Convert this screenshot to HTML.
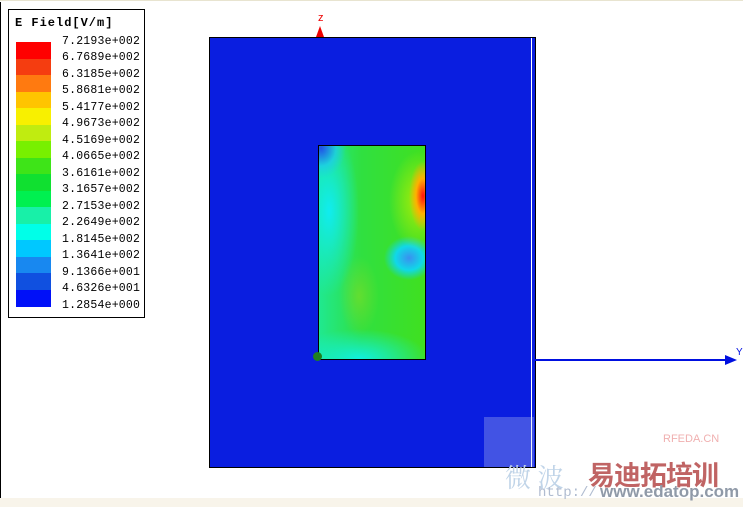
<!DOCTYPE html>
<html><head><style>
body{margin:0;width:743px;height:507px;background:#fff;position:relative;overflow:hidden;font-family:"Liberation Mono",monospace}
.a{position:absolute}
#leg{left:8px;top:9px;width:135px;height:307px;border:1px solid #000;background:#fff}
.sw{position:absolute;left:7px;width:35px;height:17px}
.lb{position:absolute;left:53px;font-size:11.5px;color:#000;letter-spacing:0.2px}
</style></head><body>
<div class="a" style="left:0;top:0;width:743px;height:1px;background:#e8e4d0"></div>
<div class="a" style="left:0;top:2px;width:1px;height:496px;background:#000"></div>
<div class="a" style="left:0;top:498px;width:743px;height:9px;background:#f8f4ea"></div>
<div id="leg" class="a">
<div class="a" style="left:6px;top:6px;font-size:12px;font-weight:bold;letter-spacing:1px">E Field[V/m]</div>
<div class="sw" style="top:32px;background:#ff0000"></div><div class="lb" style="top:25px">7.2193e+002</div>
<div class="sw" style="top:49px;background:#f53d10"></div><div class="lb" style="top:41px">6.7689e+002</div>
<div class="sw" style="top:65px;background:#ff7a10"></div><div class="lb" style="top:58px">6.3185e+002</div>
<div class="sw" style="top:82px;background:#ffc400"></div><div class="lb" style="top:74px">5.8681e+002</div>
<div class="sw" style="top:98px;background:#f8f000"></div><div class="lb" style="top:91px">5.4177e+002</div>
<div class="sw" style="top:115px;background:#c0ec10"></div><div class="lb" style="top:107px">4.9673e+002</div>
<div class="sw" style="top:131px;background:#78f000"></div><div class="lb" style="top:124px">4.5169e+002</div>
<div class="sw" style="top:148px;background:#3ee418"></div><div class="lb" style="top:140px">4.0665e+002</div>
<div class="sw" style="top:164px;background:#10e030"></div><div class="lb" style="top:157px">3.6161e+002</div>
<div class="sw" style="top:181px;background:#00f050"></div><div class="lb" style="top:173px">3.1657e+002</div>
<div class="sw" style="top:197px;background:#18f0a8"></div><div class="lb" style="top:190px">2.7153e+002</div>
<div class="sw" style="top:214px;background:#00ffe8"></div><div class="lb" style="top:206px">2.2649e+002</div>
<div class="sw" style="top:230px;background:#00c8ff"></div><div class="lb" style="top:223px">1.8145e+002</div>
<div class="sw" style="top:247px;background:#1888f0"></div><div class="lb" style="top:239px">1.3641e+002</div>
<div class="sw" style="top:263px;background:#1050e0"></div><div class="lb" style="top:256px">9.1366e+001</div>
<div class="sw" style="top:280px;background:#0010f8"></div><div class="lb" style="top:272px">4.6326e+001</div>
<div class="lb" style="top:289px">1.2854e+000</div>
</div>
<div class="a" style="left:209px;top:37px;width:325px;height:429px;border:1px solid #000;background:#0a1ee0"></div>
<div class="a" style="left:531px;top:38px;width:1px;height:429px;background:#fff"></div>
<div class="a" style="left:318px;top:145px;width:106px;height:213px;border:1px solid #000;background:
radial-gradient(ellipse 14px 35px at 104px 50px,#ff1010,#ffb000 50%,rgba(255,240,0,0) 100%),
radial-gradient(ellipse 30px 50px at 100px 55px,rgba(200,240,0,.8),rgba(120,230,0,0)),
radial-gradient(ellipse 25px 22px at 90px 112px,#3a90f0,#10d8e8 55%,rgba(0,230,180,0)),
radial-gradient(ellipse 25px 30px at 2px 2px,#2050e8,rgba(30,200,240,.7) 60%,rgba(0,0,0,0)),
radial-gradient(ellipse 30px 85px at 10px 65px,#10ecf0,rgba(20,230,180,0)),
radial-gradient(ellipse 70px 30px at 40px 213px,#10f0e0,rgba(20,230,120,0)),
radial-gradient(ellipse 20px 40px at 40px 150px,rgba(120,220,40,.7),rgba(0,0,0,0)),
linear-gradient(90deg,#20e890,#30e040 40%,#40e020)"></div>
<div class="a" style="left:313px;top:352px;width:9px;height:9px;border-radius:50%;background:#208020"></div>
<div class="a" style="left:318px;top:12px;color:#e00;font-size:11px;font-family:'Liberation Sans',sans-serif">z</div>
<div class="a" style="left:316px;top:26px;width:0;height:0;border-left:4px solid transparent;border-right:4px solid transparent;border-bottom:11px solid #e00"></div>
<div class="a" style="left:535px;top:359px;width:193px;height:2px;background:#0010e0"></div>
<div class="a" style="left:725px;top:355px;width:0;height:0;border-top:5px solid transparent;border-bottom:5px solid transparent;border-left:12px solid #0010e0"></div>
<div class="a" style="left:736px;top:347px;color:#0010e0;font-size:10px;font-family:'Liberation Sans',sans-serif">Y</div>
<div class="a" style="left:484px;top:417px;width:50px;height:50px;background:rgba(200,210,240,.3)"></div>
<div class="a" style="left:663px;top:433px;color:#f0b0b0;font-size:11px;font-family:'Liberation Sans',sans-serif">RFEDA.CN</div>
<div class="a" style="left:588px;top:454px;color:#c06464;font-size:27px;font-weight:bold;font-family:'Liberation Sans','Noto Sans CJK SC',sans-serif;letter-spacing:-1px">易迪拓培训</div>
<div class="a" style="left:505px;top:458px;color:#c0d4e8;font-size:26px;font-family:'Noto Serif CJK SC',serif">微 波</div>
<div class="a" style="left:538px;top:485px;color:#b0bcd0;font-size:14px;font-family:'Liberation Mono',monospace">http://</div>
<div class="a" style="left:600px;top:482px;color:#909aa8;font-size:17px;font-weight:bold;font-family:'Liberation Sans',sans-serif">www.edatop.com</div>
</body></html>
